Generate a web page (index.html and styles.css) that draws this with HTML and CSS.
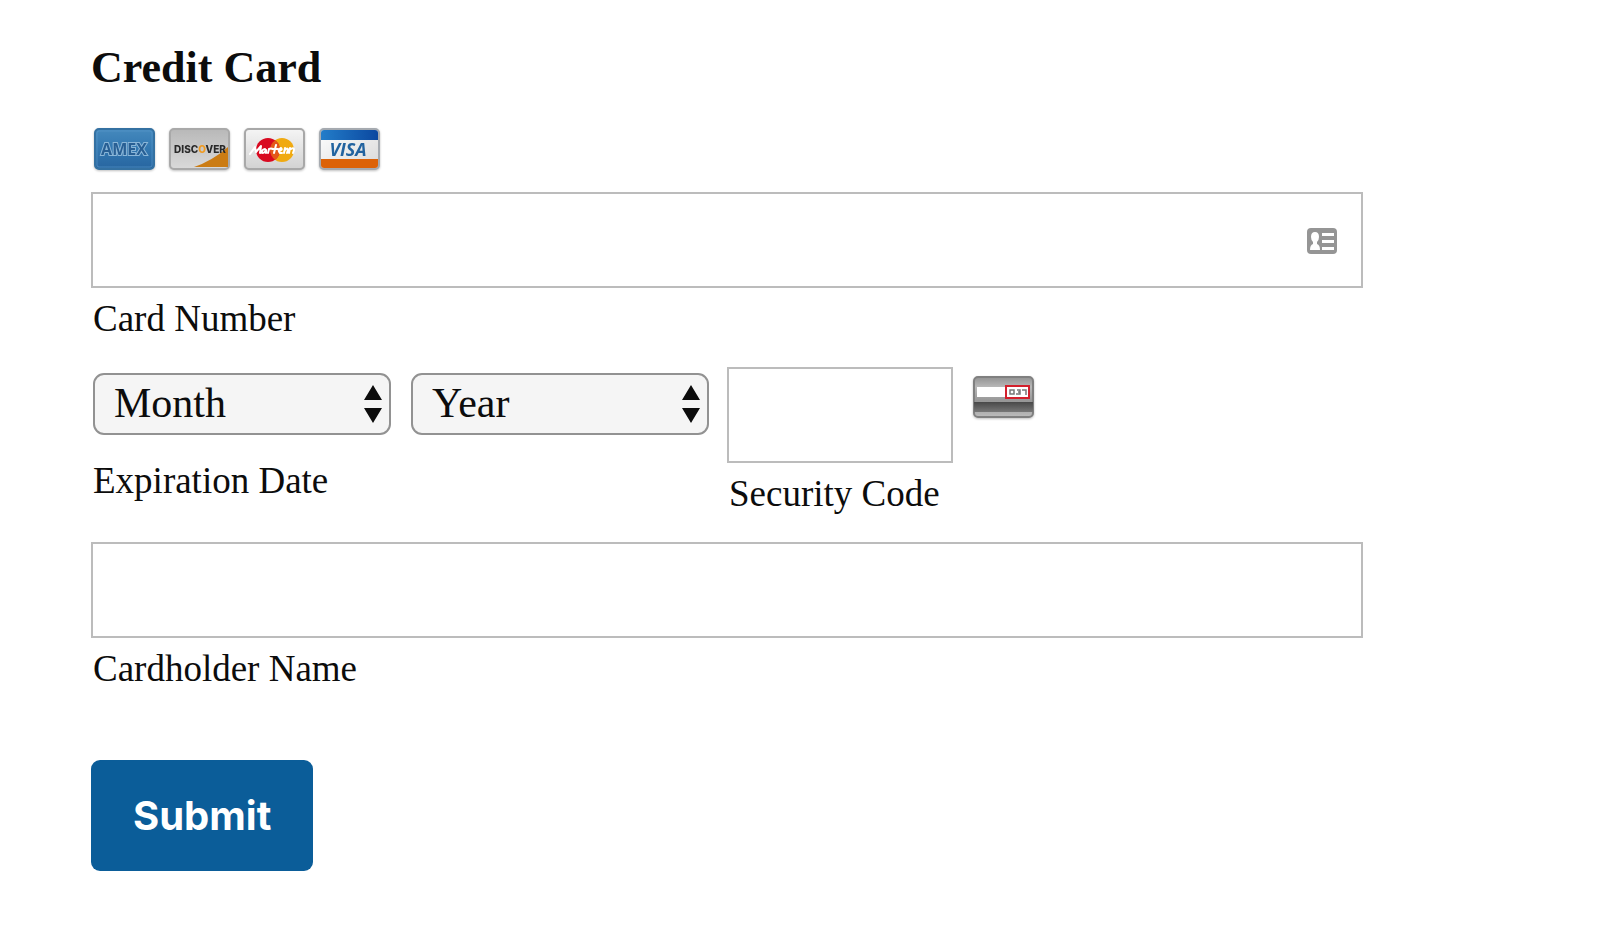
FILE: index.html
```html
<!DOCTYPE html>
<html lang="en">
<head>
<meta charset="utf-8">
<meta name="viewport" content="width=device-width, initial-scale=1">
<title>Credit Card</title>
<link rel="stylesheet" href="styles.css">
</head>
<body>
<form class="payment">
  <h1 class="title">Credit Card</h1>
  <div class="brands">
    <svg class="brand" viewBox="0 0 61 42" role="img" aria-label="American Express">
      <defs>
        <linearGradient id="amex" x1="0" y1="0" x2="0" y2="1"><stop offset="0" stop-color="#4589bd"/><stop offset=".5" stop-color="#3277b0"/><stop offset="1" stop-color="#2865a0"/></linearGradient>
      </defs>
      <rect x="1" y="1" width="59" height="40" rx="4" fill="url(#amex)" stroke="#3471a2" stroke-width="2"/>
      <rect x="3" y="3" width="55" height="36" rx="2" fill="none" stroke="#5b9bcb" stroke-opacity=".6"/>
      <text class="amex-text" x="30" y="27" text-anchor="middle">AMEX</text>
    </svg>
    <svg class="brand" viewBox="0 0 61 42" role="img" aria-label="Discover">
      <defs>
        <linearGradient id="disc" x1="0" y1="0" x2="0" y2="1"><stop offset="0" stop-color="#b8b8b8"/><stop offset="1" stop-color="#dadada"/></linearGradient>
      </defs>
      <rect x="1" y="1" width="59" height="40" rx="4" fill="url(#disc)" stroke="#a9a9a9" stroke-width="2"/>
      <path d="M59 19V39H25Q43 33 59 19Z" fill="#cb7c14"/>
      <text class="discover-text" x="31" y="25" text-anchor="middle">DISC<tspan fill="#f09a20">O</tspan>VER</text>
    </svg>
    <svg class="brand" viewBox="0 0 61 42" role="img" aria-label="MasterCard">
      <defs>
        <linearGradient id="mc" x1="0" y1="0" x2="0" y2="1"><stop offset="0" stop-color="#f5f5f5"/><stop offset="1" stop-color="#d2d2d2"/></linearGradient>
      </defs>
      <rect x="1" y="1" width="59" height="40" rx="4" fill="url(#mc)" stroke="#a8a8a8" stroke-width="2"/>
      <circle cx="38" cy="22" r="12" fill="#f0aa11"/>
      <circle cx="24" cy="22" r="12" fill="#d90920"/>
      <path d="M31 12.300A12 12 0 0 1 31 31.700A12 12 0 0 1 31 12.300Z" fill="#e4581a"/>
      <g fill="none" stroke="#fff" stroke-width="2" stroke-linecap="round" stroke-linejoin="round">
        <path d="M6 26l5-7 1 5 5-6-1 7M21 21q-4 1-3 4 3 0 4-3l0 3M24 25l1-4q2-1 4 0M32 17l-2 8M28 21h6M35 23q4-1 2-3-4 2-1 5h2M41 20l-1 5M41 22q3-3 3 0l-1 3M46 20l-1 5M47 21q3-2 3 1l-1 3"/>
      </g>
    </svg>
    <svg class="brand" viewBox="0 0 61 42" role="img" aria-label="Visa">
      <defs>
        <linearGradient id="visa-blue"><stop offset="0" stop-color="#237dc9"/><stop offset="1" stop-color="#0b48a0"/></linearGradient>
        <linearGradient id="visa-bg" x1="0" y1="0" x2="1" y2="1"><stop offset="0" stop-color="#fff"/><stop offset="1" stop-color="#d8d8d8"/></linearGradient>
      </defs>
      <rect x="1" y="1" width="59" height="40" rx="4" fill="url(#visa-bg)" stroke="#a5aab0" stroke-width="2"/>
      <path d="M2 5q0-3 3-3h51q3 0 3 3v7H2Z" fill="url(#visa-blue)"/>
      <path d="M2 31h57v6q0 3-3 3H5q-3 0-3-3Z" fill="#dc6208"/>
      <text class="visa-text" x="29" y="28" text-anchor="middle">VISA</text>
    </svg>
  </div>

  <div class="field">
    <div class="input-wrap">
      <input class="text-input" id="number" type="text" inputmode="numeric">
      <svg class="contact-icon" viewBox="0 0 30 26" aria-hidden="true">
        <rect width="30" height="26" rx="4" fill="#959595"/>
        <g fill="#fff"><path d="M15 5h12v3H15zM15 12h12v3H15zM15 19h12v3H15z"/><path d="M8 4q4 0 4 5 0 3-2 5v2q3 1 3 6H3q0-5 3-6v-2q-2-2-2-5 0-5 4-5Z"/></g>
      </svg>
    </div>
    <label class="label" for="number">Card Number</label>
  </div>

  <div class="details">
    <div class="expiry" role="group" aria-labelledby="expiry-label">
      <div class="selects">
        <div class="select-wrap">
          <select class="select" aria-label="Month"><option>Month</option></select>
          <svg class="arrows" viewBox="0 0 18 38" aria-hidden="true"><path d="M9 0l9 15H0zM9 38l9-15H0z"/></svg>
        </div>
        <div class="select-wrap">
          <select class="select" aria-label="Year"><option>Year</option></select>
          <svg class="arrows" viewBox="0 0 18 38" aria-hidden="true"><path d="M9 0l9 15H0zM9 38l9-15H0z"/></svg>
        </div>
      </div>
      <span class="label" id="expiry-label">Expiration Date</span>
    </div>
    <div class="security">
      <input class="text-input" id="code" type="text" inputmode="numeric">
      <label class="label" for="code">Security Code</label>
    </div>
    <svg class="brand code-icon" viewBox="0 0 61 42" aria-hidden="true">
      <defs>
        <linearGradient id="back" x1="0" y1="0" x2="0" y2="1"><stop offset="0" stop-color="#929292"/><stop offset=".25" stop-color="#b8b8b8"/><stop offset=".6" stop-color="#969696"/><stop offset="1" stop-color="#bcbcbc"/></linearGradient>
        <linearGradient id="stripe" x1="0" y1="0" x2="0" y2="1"><stop offset="0" stop-color="#484848"/><stop offset="1" stop-color="#777"/></linearGradient>
      </defs>
      <rect x="1" y="1" width="59" height="40" rx="4" fill="url(#back)" stroke="#808080" stroke-width="2"/>
      <path d="M1 26h59v10H1z" fill="url(#stripe)"/>
      <path d="M4 11h29v10H4z" fill="#fff"/>
      <rect x="33" y="10" width="23" height="12" fill="#fff" stroke="#d3202c" stroke-width="2"/>
      <path d="M37 14h4v4h-4zM44 14h3v4h-4M45 16h2M49 14h4v5" fill="none" stroke="#777" stroke-width="1.500"/>
    </svg>
  </div>

  <div class="field">
    <input class="text-input" id="holder" type="text">
    <label class="label" for="holder">Cardholder Name</label>
  </div>
  <button class="submit" type="submit">Submit</button>
</form>
</body>
</html>
```
FILE: styles.css
```css
* {
  box-sizing: border-box;
}

body {
  margin: 0;
  background: #fff;
  color: #0c0c0c;
  font-family: "Liberation Serif", "Times New Roman", serif;
}

.payment {
  padding: 43px 237px 64px 91px;
}

.title {
  margin: 0;
  font-size: 44px;
  line-height: 50px;
  font-weight: 700;
}

.brands {
  display: flex;
  gap: 14px;
  margin: 35px 0 22px 3px;
}

.brand {
  display: block;
  flex: none;
  width: 61px;
  height: 42px;
  filter: drop-shadow(0 1px 1px rgba(0, 0, 0, 0.25));
}

.amex-text {
  font: 700 16px "Open Sans", sans-serif;
  fill: #285f94;
  stroke: #8ab6d8;
  stroke-width: 2px;
  paint-order: stroke;
}

.discover-text {
  font: 800 10px Inter, sans-serif;
  fill: #292929;
}

.visa-text {
  font: italic 700 18px "Open Sans", sans-serif;
  fill: #22639f;
}

.input-wrap,
.select-wrap {
  position: relative;
}

.text-input {
  display: block;
  width: 100%;
  height: 96px;
  padding: 0 24px;
  border: 2px solid #bcbcbc;
  border-radius: 0;
  background: #fff;
  color: inherit;
  font: inherit;
  font-size: 42px;
}

.contact-icon {
  position: absolute;
  top: 36px;
  right: 26px;
  width: 30px;
  height: 26px;
}

.label {
  display: block;
  margin: 10px 0 0 2px;
  font-size: 37px;
  line-height: 42px;
}

.details {
  display: flex;
  align-items: flex-start;
  margin: 27px 0;
}

.expiry {
  padding: 6px 0 0 2px;
}

.selects {
  display: flex;
  gap: 20px;
}

.expiry .label {
  margin: 25px 0 0;
}

.select {
  display: block;
  width: 298px;
  height: 62px;
  padding: 0 48px 2px 19px;
  appearance: none;
  border: 2px solid #929292;
  border-radius: 11px;
  background: #f5f5f5;
  color: inherit;
  font: inherit;
  font-size: 42px;
}

.arrows {
  position: absolute;
  top: 12px;
  right: 9px;
  width: 18px;
  height: 38px;
  fill: #0c0c0c;
  pointer-events: none;
}

.security {
  width: 226px;
  margin-left: 18px;
}

.code-icon {
  margin: 9px 0 0 20px;
}

.submit {
  display: block;
  margin-top: 70px;
  padding: 30px 42px;
  border: 0;
  border-radius: 9px;
  background: #0b5d99;
  color: #fff;
  font: 700 40px/51px Inter, sans-serif;
}
```
